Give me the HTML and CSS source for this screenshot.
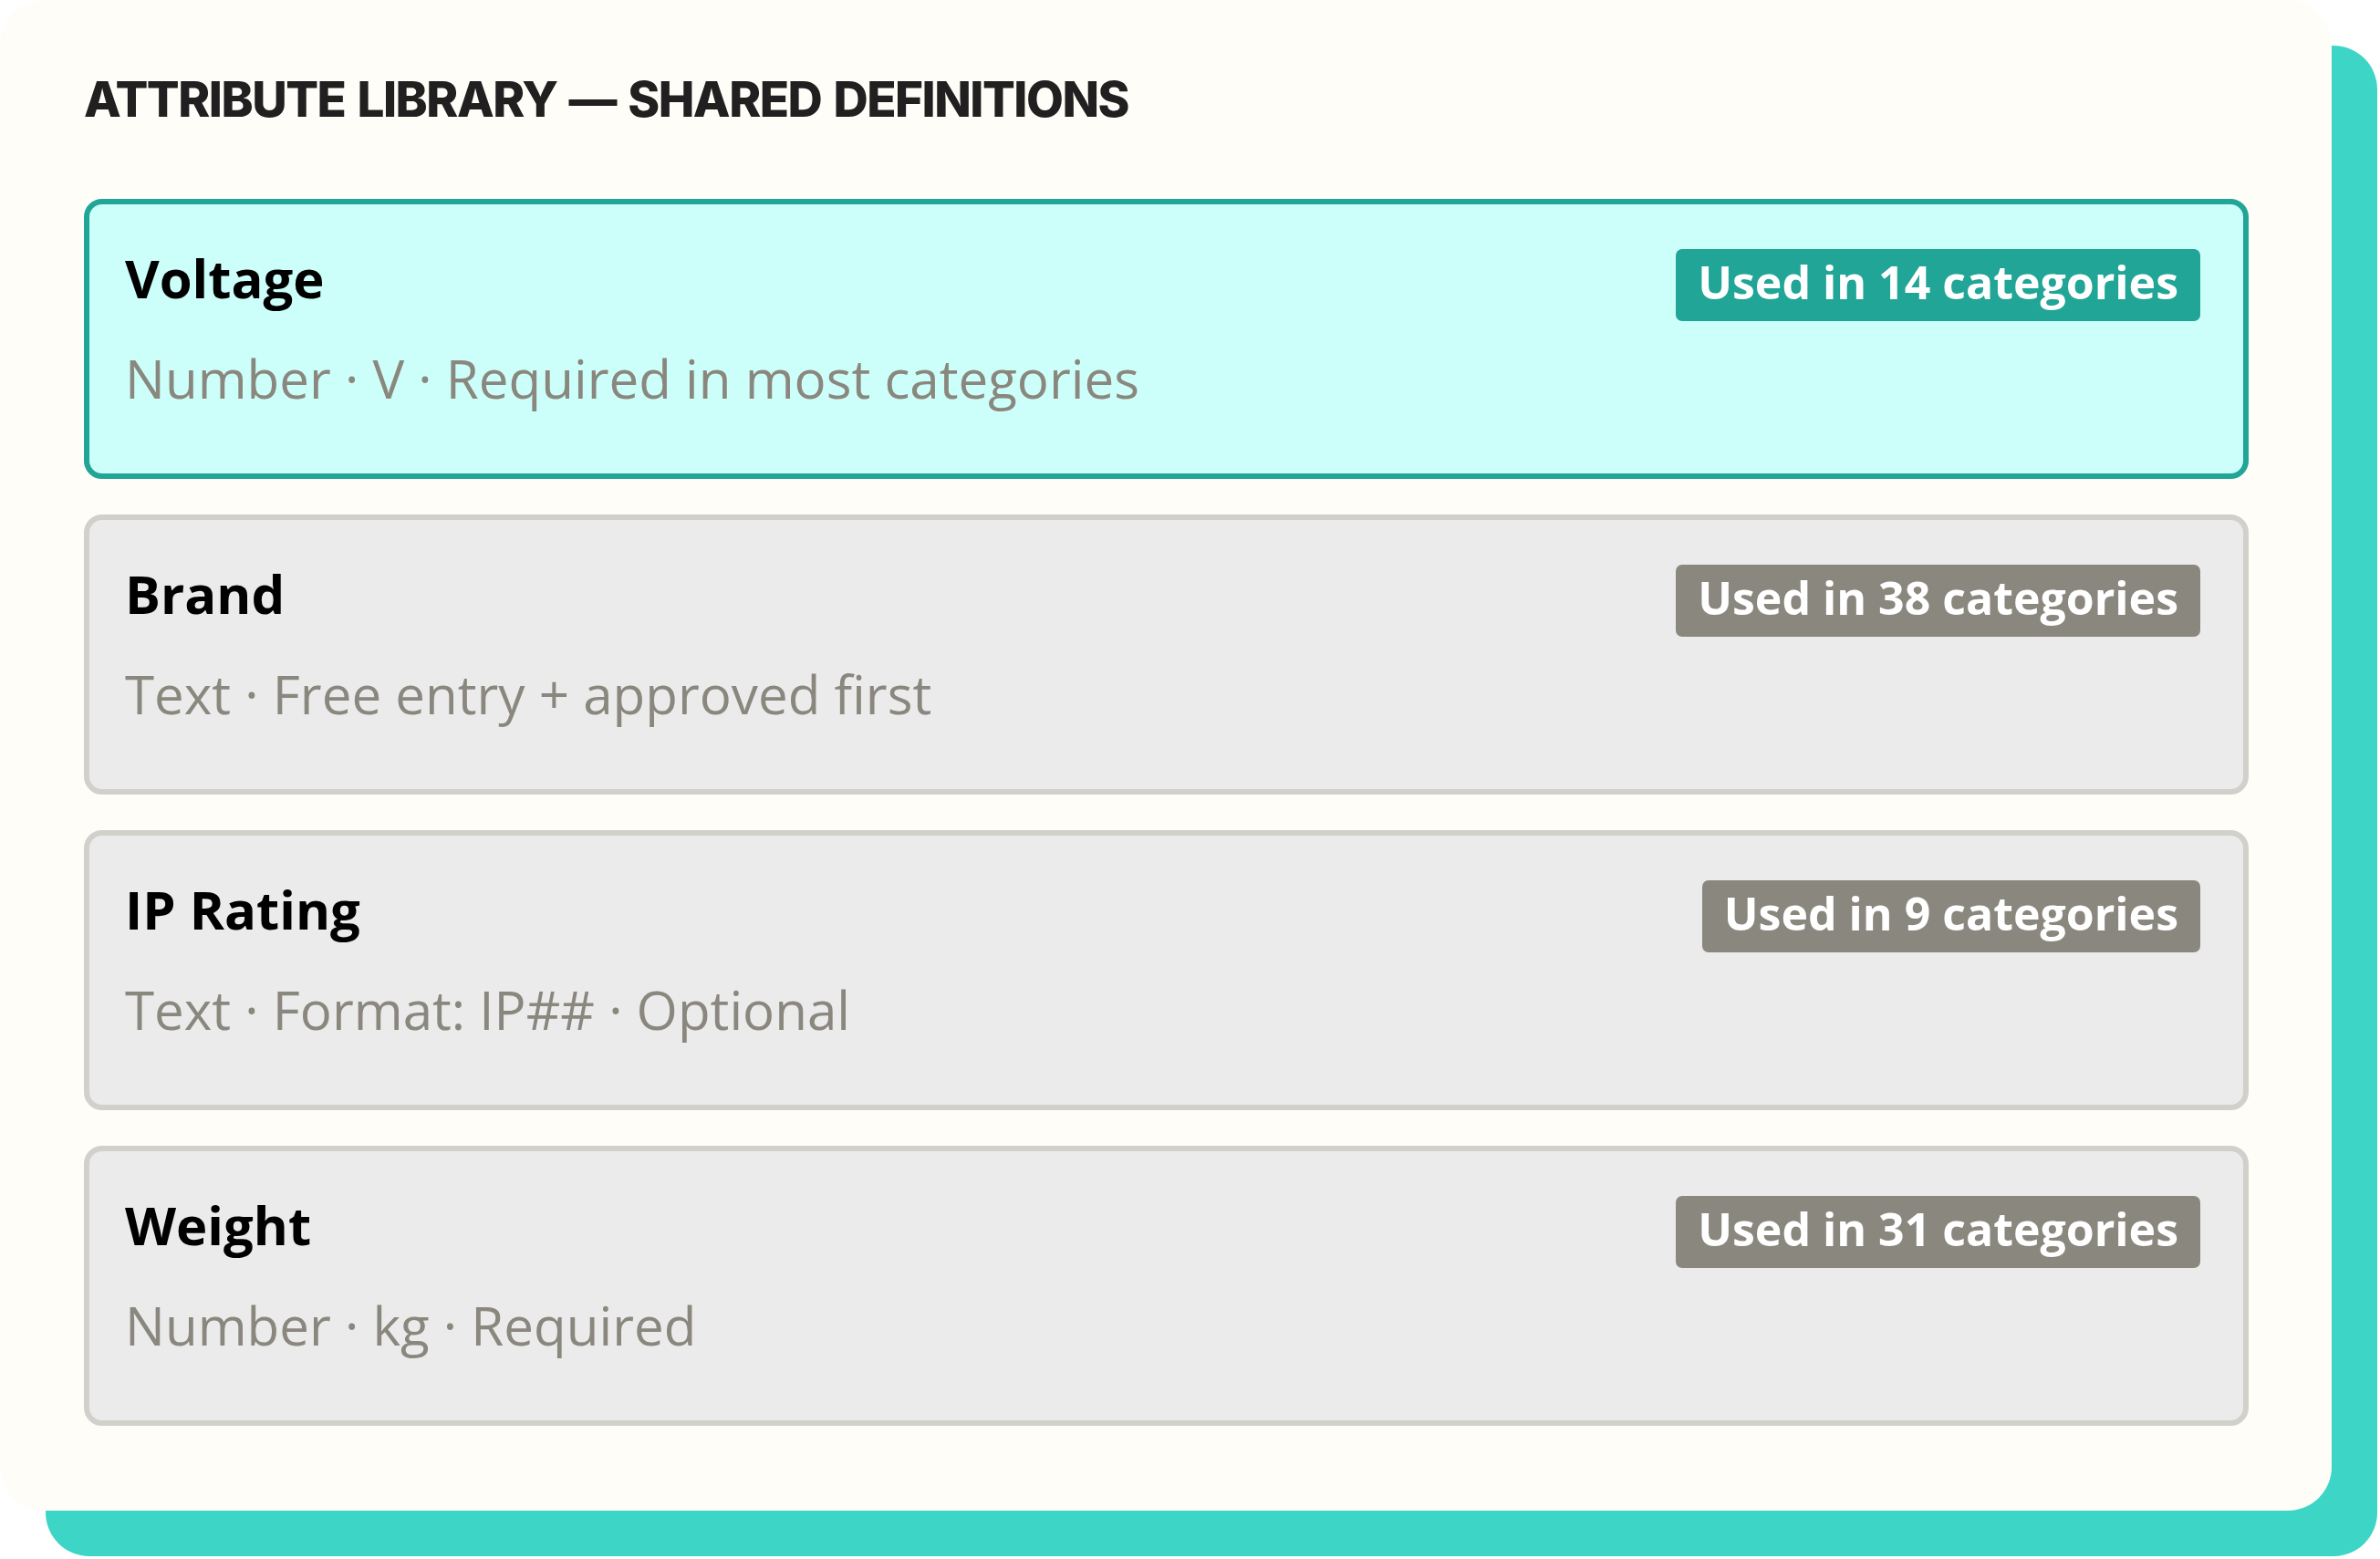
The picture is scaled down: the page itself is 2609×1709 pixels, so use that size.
FILE: index.html
```html
<!DOCTYPE html>
<html lang="en">
<head>
<meta charset="utf-8">
<title>Attribute Library</title>
<link rel="stylesheet" href="styles.css">
</head>
<body>
<div class="stage">
<main class="panel">
  <h1 class="title">ATTRIBUTE LIBRARY — SHARED DEFINITIONS</h1>
  <ul class="list">
    <li class="attr attr-active">
      <div class="info">
        <div class="name">Voltage</div>
        <div class="meta">Number · V · Required in most categories</div>
      </div>
      <span class="badge badge-active">Used in 14 categories</span>
    </li>
    <li class="attr">
      <div class="info">
        <div class="name">Brand</div>
        <div class="meta">Text · Free entry + approved first</div>
      </div>
      <span class="badge">Used in 38 categories</span>
    </li>
    <li class="attr">
      <div class="info">
        <div class="name">IP Rating</div>
        <div class="meta">Text · Format: IP## · Optional</div>
      </div>
      <span class="badge">Used in 9 categories</span>
    </li>
    <li class="attr">
      <div class="info">
        <div class="name">Weight</div>
        <div class="meta">Number · kg · Required</div>
      </div>
      <span class="badge">Used in 31 categories</span>
    </li>
  </ul>
</main>
</div>
</body>
</html>
```

FILE: styles.css
```css
html, body {
  margin: 0;
  padding: 0;
  background: #ffffff;
}

.stage {
  width: 2609px;
  height: 1709px;
  overflow: hidden;
}

.panel {
  box-sizing: border-box;
  width: 2556px;
  height: 1656px;
  background: #fffdf8;
  border-radius: 48px;
  box-shadow: 50px 50px 0 #3cd5c6;
  padding: 82px 91px 0 92px;
}

.title {
  margin: 0;
  font-family: "Inter", "Liberation Sans", sans-serif;
  font-weight: 800;
  font-size: 53px;
  line-height: 54px;
  letter-spacing: -1.5px;
  word-spacing: 3px;
  color: #211f1f;
}

.list {
  list-style: none;
  margin: 82px 0 0;
  padding: 0;
  display: flex;
  flex-direction: column;
  gap: 39px;
}

.attr {
  box-sizing: border-box;
  height: 307px;
  display: flex;
  justify-content: space-between;
  align-items: flex-start;
  padding: 40px 47px 0 39px;
  background: #ebebeb;
  border: 6px solid #d1d0cb;
  border-radius: 20px;
  font-family: "Open Sans", "Noto Sans", sans-serif;
}

.attr-active {
  background: #ccfffa;
  border-color: #20a596;
}

.info {
  display: flex;
  flex-direction: column;
  gap: 29px;
}

.name {
  font-weight: 700;
  font-size: 58px;
  line-height: 82px;
  color: #000000;
}

.meta {
  font-weight: 400;
  font-size: 58.3px;
  line-height: 79px;
  color: #8a877e;
}

.badge {
  margin-top: 9px;
  padding: 11px 24px 18px;
  border-radius: 7px;
  background: #8a877e;
  color: #ffffff;
  font-weight: 700;
  font-size: 50px;
  line-height: 50px;
  white-space: nowrap;
}

.badge-active {
  background: #20a596;
}
```
